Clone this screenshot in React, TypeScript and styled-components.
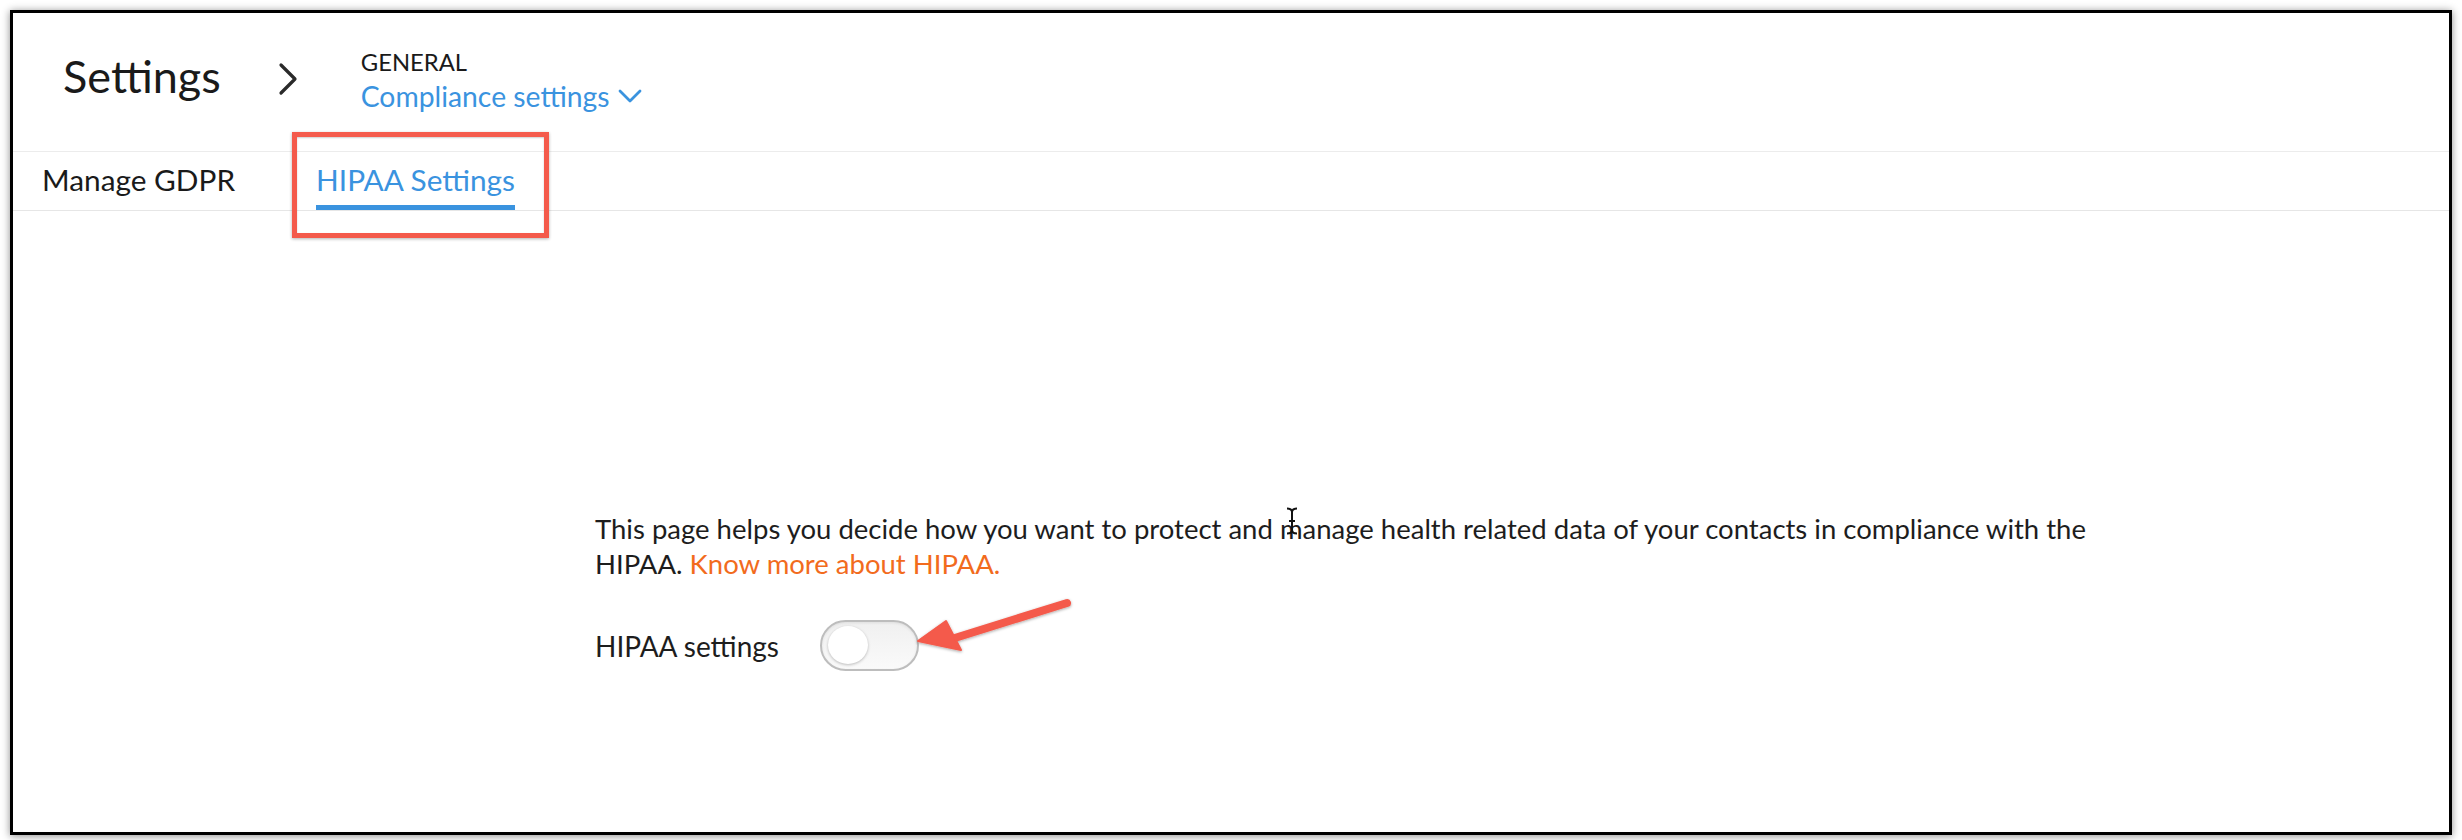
import React, { useState } from 'react';
import styled, { createGlobalStyle } from 'styled-components';

const GlobalStyle = createGlobalStyle`
  html, body {
    margin: 0;
    padding: 0;
    background: #fff;
  }
  body {
    font-family: Lato, 'Open Sans', 'Liberation Sans', sans-serif;
    color: #1d1d1d;
  }
`;

// outer window with the black frame + drop shadow
const Page = styled.div`
  width: 2462px;
  height: 840px;
  padding: 10px 10px 11px 10px;
  box-sizing: border-box;
`;

const Frame = styled.div`
  position: relative;
  height: 100%;
  border: 3px solid #000;
  box-shadow: 0 1px 8px rgba(0, 0, 0, 0.45);
  background: #fff;
  display: flex;
  flex-direction: column;
`;

const Header = styled.div`
  display: flex;
  align-items: center;
  height: 138px;
  padding-left: 50px;
`;

const Title = styled.div`
  font-size: 45px;
  color: #1a1a1a;
  margin-bottom: 13px;
`;

const Crumb = styled.div`
  display: flex;
  align-items: center;
  margin-left: 57px;
  margin-bottom: 6px;
  color: #2a2a2a;
`;

const Breadcrumb = styled.div`
  display: flex;
  flex-direction: column;
  margin-left: 63px;
  margin-bottom: 3px;
`;

const Section = styled.div`
  font-size: 23.8px;
  color: #1a1a1a;
  line-height: 30px;
`;

const Dropdown = styled.div`
  display: flex;
  align-items: center;
  gap: 8px;
  font-size: 28.3px;
  color: #3a93df;
  line-height: 38px;
  cursor: pointer;
`;

const TabBar = styled.div`
  display: flex;
  align-items: stretch;
  height: 58px;
  border-top: 1px solid #ececec;
  border-bottom: 1px solid #e6e6e6;
  padding-left: 29px;
  gap: 81px;
`;

const Tab = styled.div<{ $active?: boolean }>`
  display: flex;
  align-items: center;
  font-size: 29.8px;
  color: ${(p) => (p.$active ? '#3a93df' : '#1a1a1a')};
  border-bottom: 5px solid ${(p) => (p.$active ? '#3a93df' : 'transparent')};
  padding-top: 2px;
  box-sizing: border-box;
  cursor: pointer;
`;

const Content = styled.div`
  flex: 1;
  padding: 300px 0 0 582px;
`;

const Text = styled.p`
  margin: 0;
  width: 1520px;
  font-size: 27.5px;
  line-height: 35px;
  color: #1d1d1d;
`;

const Link = styled.a`
  color: #f26b1d;
  text-decoration: none;
`;

const Row = styled.div`
  display: flex;
  align-items: center;
  gap: 41px;
  margin-top: 39px;
`;

const Label = styled.span`
  font-size: 28px;
  color: #1d1d1d;
`;

const Track = styled.button<{ $on: boolean }>`
  position: relative;
  width: 99px;
  height: 51px;
  border-radius: 26px;
  border: 2px solid #bdbdbd;
  background: ${(p) => (p.$on ? '#3a93df' : 'linear-gradient(#f0f0f0, #fafafa)')};
  box-shadow: inset 0 1px 3px rgba(0, 0, 0, 0.08);
  padding: 0;
  cursor: pointer;
`;

const Knob = styled.span<{ $on: boolean }>`
  position: absolute;
  top: 4px;
  left: ${(p) => (p.$on ? '52px' : '6px')};
  width: 40px;
  height: 38px;
  border-radius: 50%;
  background: #fff;
  box-shadow: 0 1px 3px rgba(0, 0, 0, 0.25);
`;

// screenshot annotations sit on top of the page
const Highlight = styled.div`
  position: absolute;
  left: 279px;
  top: 119px;
  width: 257px;
  height: 106px;
  box-sizing: border-box;
  border: 5px solid #f45a4b;
  box-shadow: 0 1px 3px rgba(0, 0, 0, 0.3), inset 0 1px 2px rgba(0, 0, 0, 0.2);
  pointer-events: none;
`;

const Overlay = styled.svg`
  position: absolute;
  pointer-events: none;
  overflow: visible;
`;

export default function App() {
  const [on, setOn] = useState(false);

  return (
    <Page>
      <GlobalStyle />
      <Frame>
        <Header>
          <Title>Settings</Title>
          <Crumb>
            <svg width="20" height="34" viewBox="0 0 20 34">
              <path d="M3 3 L17 17 L3 31" fill="none" stroke="#2a2a2a" strokeWidth="3.2" strokeLinecap="round" strokeLinejoin="round" />
            </svg>
          </Crumb>
          <Breadcrumb>
            <Section>GENERAL</Section>
            <Dropdown>
              Compliance settings
              <svg width="24" height="14" viewBox="0 0 24 14">
                <path d="M2 2 L12 12 L22 2" fill="none" stroke="#3a93df" strokeWidth="2.8" strokeLinecap="round" strokeLinejoin="round" />
              </svg>
            </Dropdown>
          </Breadcrumb>
        </Header>

        <TabBar>
          <Tab>Manage GDPR</Tab>
          <Tab $active>HIPAA Settings</Tab>
        </TabBar>

        <Content>
          <Text>
            This page helps you decide how you want to protect and manage health related data of your contacts in compliance with the HIPAA.{' '}
            <Link href="#">Know more about HIPAA.</Link>
          </Text>
          <Row>
            <Label>HIPAA settings</Label>
            <Track $on={on} onClick={() => setOn(!on)}>
              <Knob $on={on} />
            </Track>
          </Row>
        </Content>

        <Highlight />

        {/* red arrow pointing at the toggle */}
        <Overlay width="180" height="70" viewBox="0 0 180 70" style={{ left: 893, top: 575 }}>
          <defs>
            <filter id="sh" x="-20%" y="-50%" width="140%" height="200%">
              <feDropShadow dx="0" dy="1" stdDeviation="1.5" floodColor="#000" floodOpacity="0.35" />
            </filter>
          </defs>
          <g filter="url(#sh)" fill="#f45a4b" stroke="#f45a4b">
            <path d="M161 15 L36 54" strokeWidth="8" strokeLinecap="round" fill="none" />
            <path d="M12 53 L40 33 L55 62 Z" strokeWidth="2" strokeLinejoin="round" />
          </g>
        </Overlay>

        {/* text cursor */}
        <Overlay width="14" height="28" viewBox="0 0 14 28" style={{ left: 1272, top: 494 }}>
          <path d="M2 1.5 Q7 1.5 7 5 Q7 1.5 12 1.5 M7 5 L7 23 M2 26.5 Q7 26.5 7 23 Q7 26.5 12 26.5 M4 14 L10 14" fill="none" stroke="#111" strokeWidth="2" />
        </Overlay>
      </Frame>
    </Page>
  );
}
